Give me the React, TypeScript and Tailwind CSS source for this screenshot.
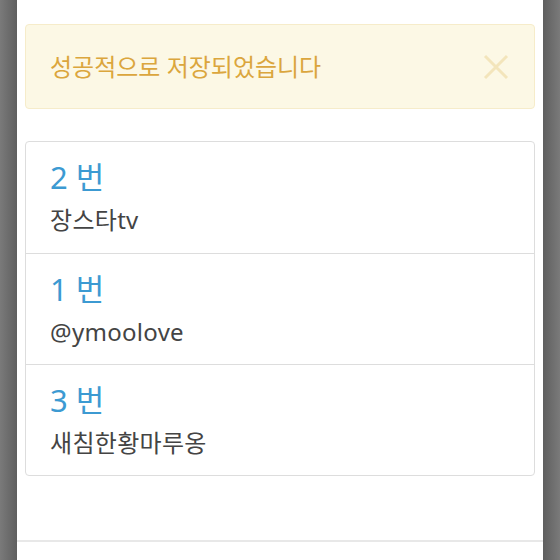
import React from "react";

const items = [
  { no: "2 번", name: "장스타tv" },
  { no: "1 번", name: "@ymoolove" },
  { no: "3 번", name: "새침한황마루옹" },
];

const App: React.FC = () => {
  return (
    <div
      className="flex h-[560px] w-[560px] overflow-hidden bg-[#777777]"
      style={{ fontFamily: '"Noto Sans", "Noto Sans CJK KR", sans-serif' }}
    >
      <div className="w-[17px] bg-gradient-to-r from-[#7a7a7a] to-[#5f5f5f]" />
      <div className="flex w-[526px] flex-col bg-white">
        <div className="px-2 pt-6">
          <div className="flex h-[85px] items-center justify-between rounded border border-[#f6ecca] bg-[#fcf8e5] pl-[24px] pr-[24px]">
            <span className="text-[24px] text-[#dba63d]">성공적으로 저장되었습니다</span>
            <svg width="26" height="26" viewBox="0 0 26 26" className="mr-[1px]">
              <path d="M2 2 L24 24 M24 2 L2 24" stroke="#f3e5bb" strokeWidth="3" />
            </svg>
          </div>
          <ul className="mt-[32px] rounded border border-[#dddddd]">
            {items.map((it, i) => (
              <li
                key={it.no}
                className={`h-[111px] px-[24px] pt-[17px] ${i > 0 ? "border-t border-[#dddddd]" : ""}`}
              >
                <div className="text-[31px] leading-[36px] text-[#3c9ad2]">{it.no}</div>
                <div className="mt-[8px] text-[24px] leading-[34px] tracking-[0.3px] text-[#444444]">{it.name}</div>
              </li>
            ))}
          </ul>
        </div>
        <div className="mt-auto h-[20px] border-t-2 border-[#e8e8e8]" />
      </div>
      <div className="flex-1 bg-gradient-to-r from-[#5f5f5f] to-[#7a7a7a]" />
    </div>
  );
};

export default App;
